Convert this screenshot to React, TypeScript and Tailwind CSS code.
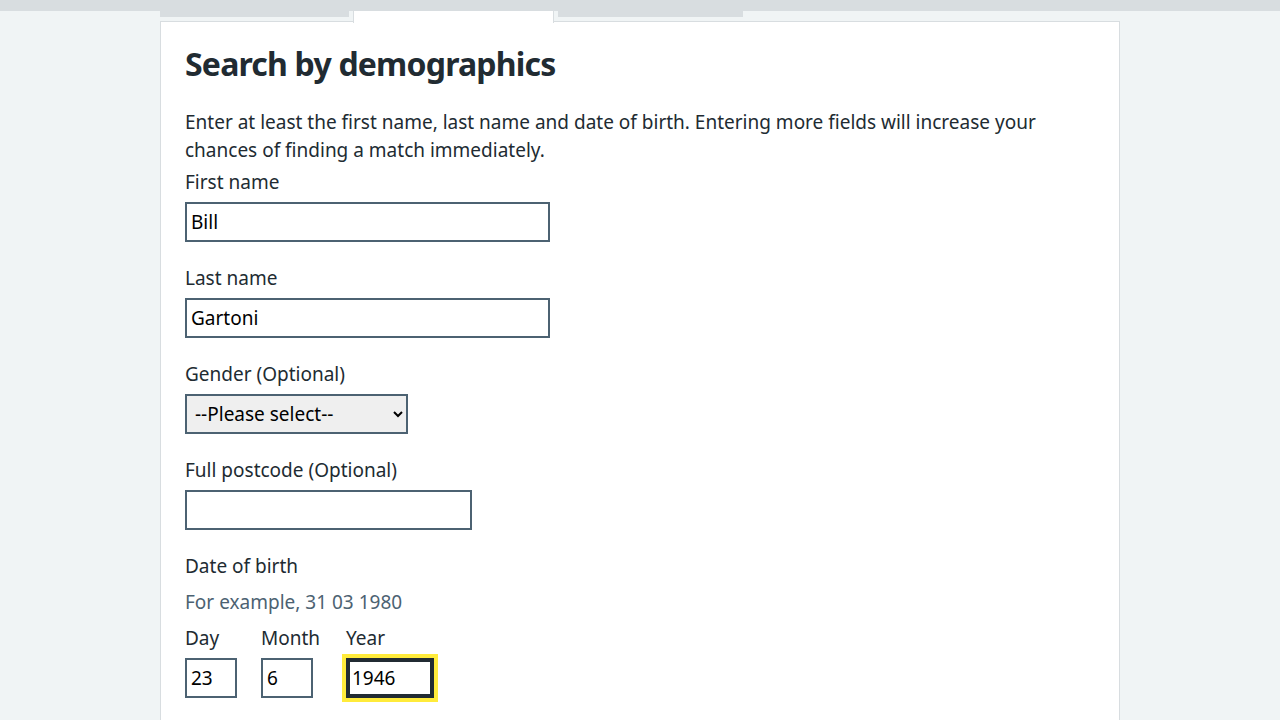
import React from 'react'

const font = { fontFamily: '"Noto Sans", "Open Sans", sans-serif' }

function Field({ label, width, value, children }: { label: string; width: string; value?: string; children?: React.ReactNode }) {
  return (
    <div className="mb-[22px]">
      <label className="mb-[6px] block text-[19px] leading-[28px] text-[#212b32]">{label}</label>
      {children ?? (
        <input
          type="text"
          defaultValue={value}
          className={`block h-10 ${width} border-2 border-[#4c6272] bg-white px-1 text-[19px] text-black outline-none`}
        />
      )}
    </div>
  )
}

export default function App() {
  return (
    <div className="min-h-screen bg-[#f0f4f5]" style={font}>
      <div className="h-[11px] bg-[#d8dde0]" />
      <div className="mx-auto w-[960px]">
        <div className="flex h-[11px] items-start border-b border-[#d8dde0]">
          <div className="h-[6px] w-[189px] bg-[#d8dde0]" />
          <div className="ml-1 -mb-px h-[12px] w-[201px] border-x border-[#d8dde0] bg-white" />
          <div className="ml-1 h-[6px] w-[185px] bg-[#d8dde0]" />
        </div>
        <div className="border-x border-[#d8dde0] bg-white px-6 pt-[22px] pb-10">
          <h2 className="mb-6 text-[32px] leading-[40px] font-bold tracking-[-0.8px] text-[#212b32]">Search by demographics</h2>
          <p className="mb-1 text-[19px] leading-[28px] text-[#212b32]">
            Enter at least the first name, last name and date of birth. Entering more fields will increase your
            chances of finding a match immediately.
          </p>
          <Field label="First name" width="w-[365px]" value="Bill" />
          <Field label="Last name" width="w-[365px]" value="Gartoni" />
          <Field label="Gender (Optional)" width="">
            <select className="block h-10 w-[223px] border-2 border-[#4c6272] bg-[#efefef] pl-1 text-[19px] text-black outline-none">
              <option>--Please select--</option>
              <option>Male</option>
              <option>Female</option>
            </select>
          </Field>
          <Field label="Full postcode (Optional)" width="w-[287px]" value="" />
          <div>
            <div className="mb-2 text-[19px] leading-[28px] text-[#212b32]">Date of birth</div>
            <div className="mb-2 text-[19px] leading-[28px] text-[#4c6272]">For example, 31 03 1980</div>
            <div className="flex gap-6">
              <div className="w-[52px]">
                <label className="mb-[6px] block text-[19px] leading-[28px] text-[#212b32]">Day</label>
                <input defaultValue="23" className="block h-10 w-[52px] border-2 border-[#4c6272] px-1 text-[19px] text-black outline-none" />
              </div>
              <div className="w-[61px]">
                <label className="mb-[6px] block text-[19px] leading-[28px] text-[#212b32]">Month</label>
                <input defaultValue="6" className="block h-10 w-[52px] border-2 border-[#4c6272] px-1 text-[19px] text-black outline-none" />
              </div>
              <div>
                <label className="mb-[6px] block text-[19px] leading-[28px] text-[#212b32]">Year</label>
                <input
                  defaultValue="1946"
                  className="block h-10 w-[88px] border-2 border-[#212b32] px-1 text-[19px] text-black shadow-[inset_0_0_0_2px_#212b32] outline-4 outline-[#ffeb3b] outline-solid"
                />
              </div>
            </div>
          </div>
        </div>
      </div>
    </div>
  )
}
